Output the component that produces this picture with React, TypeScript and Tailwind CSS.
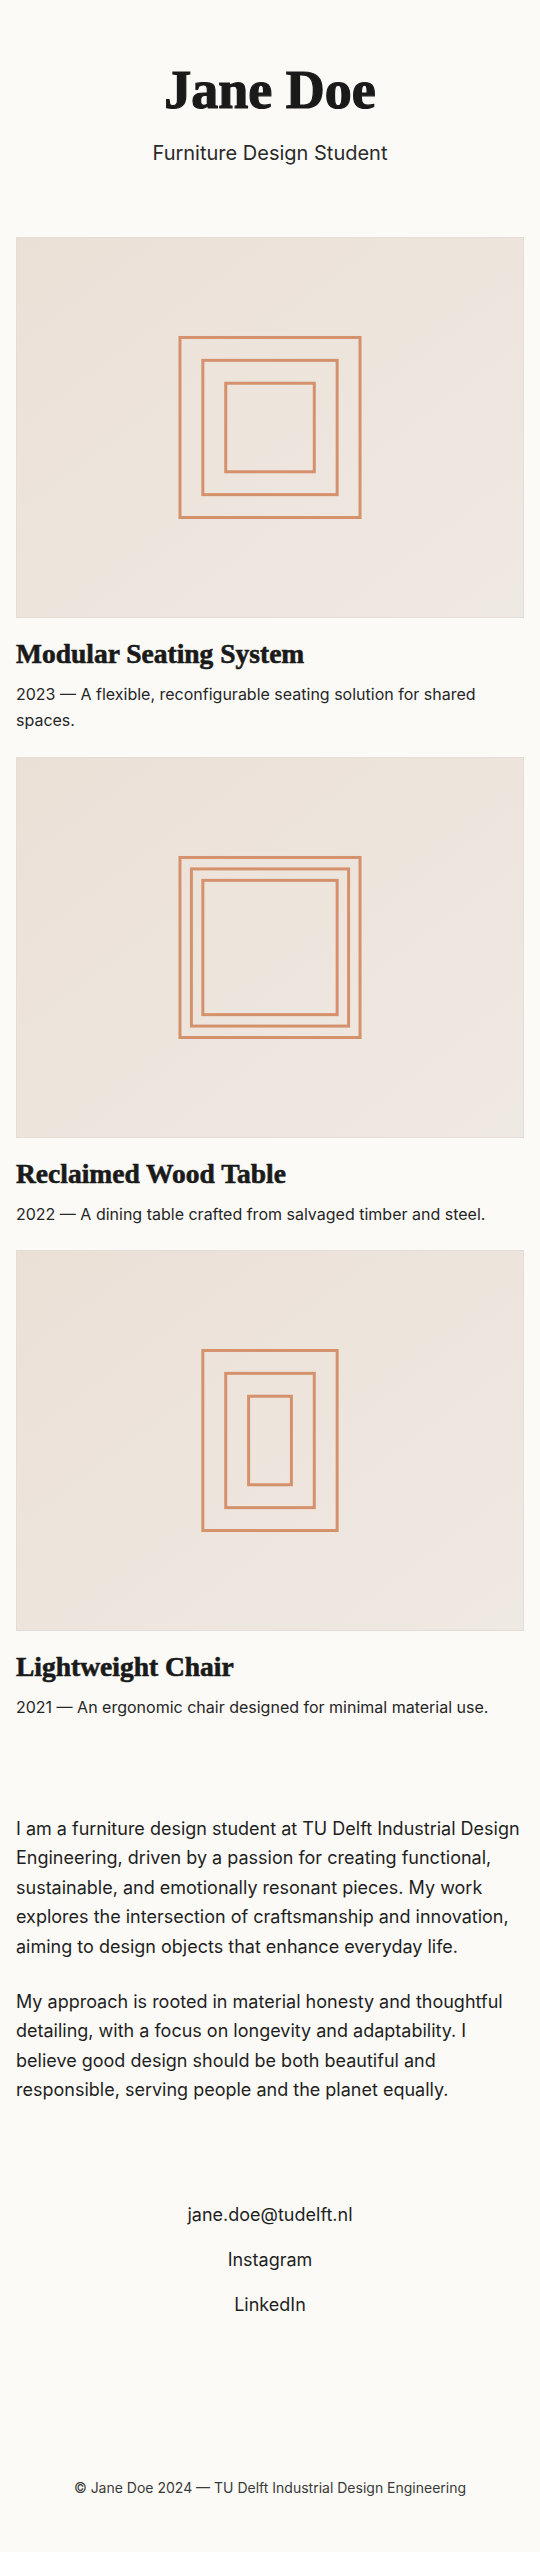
import React from "react";

type Rect = { w: number; h: number };

type Project = {
  title: string;
  text: string;
  frames: Rect[];
};

// Nested outlines, edge sizes in px (stroke 3px), centred in the 508x381 tile.
const projects: Project[] = [
  {
    title: "Modular Seating System",
    text: "2023 — A flexible, reconfigurable seating solution for shared spaces.",
    frames: [
      { w: 184, h: 184 },
      { w: 138, h: 138 },
      { w: 92, h: 92 },
    ],
  },
  {
    title: "Reclaimed Wood Table",
    text: "2022 — A dining table crafted from salvaged timber and steel.",
    frames: [
      { w: 184, h: 184 },
      { w: 161, h: 161 },
      { w: 138, h: 138 },
    ],
  },
  {
    title: "Lightweight Chair",
    text: "2021 — An ergonomic chair designed for minimal material use.",
    frames: [
      { w: 138, h: 184 },
      { w: 92, h: 138 },
      { w: 46, h: 92 },
    ],
  },
];

function Frames({ frames }: { frames: Rect[] }) {
  const W = 508;
  const H = 381;
  const s = 3;
  return (
    <svg viewBox={`0 0 ${W} ${H}`} className="block h-full w-full" aria-hidden="true">
      {frames.map((f, i) => (
        <rect
          key={i}
          x={(W - f.w) / 2 + s / 2}
          y={(H - f.h) / 2 + s / 2}
          width={f.w - s}
          height={f.h - s}
          fill="none"
          stroke="#d4916b"
          strokeWidth={s}
        />
      ))}
    </svg>
  );
}

function ProjectCard({ p }: { p: Project }) {
  return (
    <article>
      <div className="aspect-[4/3] w-full border border-[#e3ddd5] bg-linear-to-br from-[#ebe0d6] to-[#efe9e3]">
        <Frames frames={p.frames} />
      </div>
      <h2 className="mt-[19px] font-['Liberation_Serif',serif] text-[27.5px] font-bold leading-[33px] text-[#1a1a1a] [-webkit-text-stroke:0.6px_#1a1a1a]">
        {p.title}
      </h2>
      <p className="mt-[11px] text-[16px] leading-[26.4px] text-[#262626]">{p.text}</p>
    </article>
  );
}

export default function App() {
  return (
    <div className="min-h-[2552px] bg-[#fbfaf6] font-['Inter','Noto_Sans',sans-serif] text-[#1f1f1f]">
      <header className="pt-[63px] text-center">
        <h1 className="font-['Liberation_Serif',serif] text-[54px] font-bold leading-none text-[#1a1a1a] [-webkit-text-stroke:1.2px_#1a1a1a]">
          Jane Doe
        </h1>
        <p className="mt-[22px] text-[20px] leading-[28px] text-[#2a2a2a]">Furniture Design Student</p>
      </header>

      <main className="mt-[70px] flex flex-col gap-[23px] px-4">
        {projects.map((p) => (
          <ProjectCard key={p.title} p={p} />
        ))}
      </main>

      <section className="mt-[93px] px-4 text-[18px] leading-[29.6px] text-[#1f1f1f]">
        <p>
          I am a furniture design student at TU Delft Industrial Design Engineering, driven by a passion for
          creating functional, sustainable, and emotionally resonant pieces. My work explores the intersection
          of craftsmanship and innovation, aiming to design objects that enhance everyday life.
        </p>
        <p className="mt-[25px]">
          My approach is rooted in material honesty and thoughtful detailing, with a focus on longevity and
          adaptability. I believe good design should be both beautiful and responsible, serving people and the
          planet equally.
        </p>
      </section>

      <nav className="mt-[95px] flex flex-col items-center gap-[15px] text-[18px] leading-[30px] text-[#1f1f1f]">
        <a href="#">jane.doe@tudelft.nl</a>
        <a href="#">Instagram</a>
        <a href="#">LinkedIn</a>
      </nav>

      <footer className="mt-[158px] pb-[53px] text-center text-[14px] leading-[20px] text-[#3a3a3a]">
        © Jane Doe 2024 — TU Delft Industrial Design Engineering
      </footer>
    </div>
  );
}
